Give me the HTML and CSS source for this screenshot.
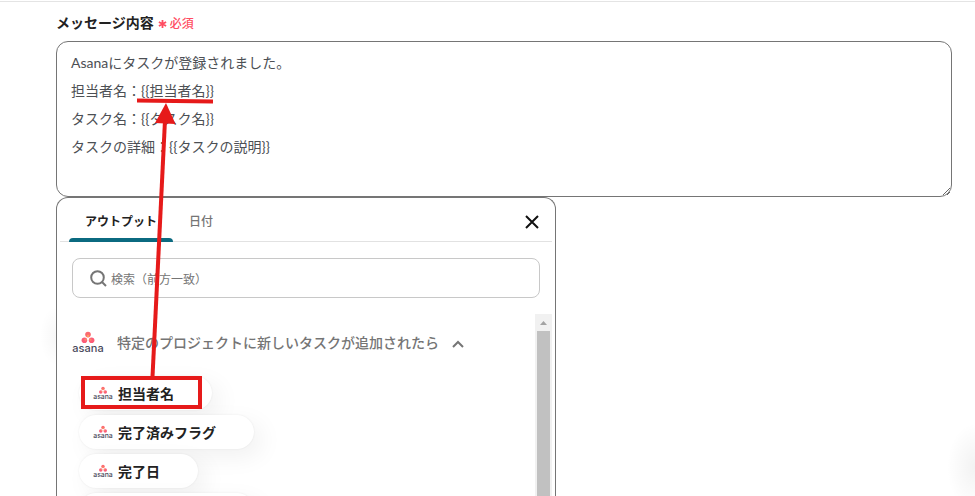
FILE: index.html
```html
<!DOCTYPE html>
<html lang="ja">
<head>
<meta charset="utf-8">
<meta name="viewport" content="width=device-width, initial-scale=1">
<title>メッセージ内容</title>
<link rel="stylesheet" href="styles.css">
</head>
<body>
<svg class="defs" aria-hidden="true">
  <symbol id="asana" viewBox="0 0 32 22">
    <circle cx="16" cy="3.6" r="2.8" fill="#fb6a70"/>
    <circle cx="12.4" cy="9.2" r="2.8" fill="#fb5c78"/>
    <circle cx="19.6" cy="9.2" r="2.8" fill="#fb5c78"/>
    <circle cx="16" cy="5" r="1.2" fill="#fda05c"/>
    <circle cx="13.6" cy="8.6" r="1.2" fill="#fd8a68"/>
    <circle cx="18.4" cy="8.6" r="1.2" fill="#fd8a68"/>
    <text x="16" y="21" text-anchor="middle" class="logo-text">asana</text>
  </symbol>
</svg>
<main class="page">
  <div class="field-head">
    <label class="field-label" for="message">メッセージ内容</label>
    <span class="required">
      <svg class="asterisk" viewBox="0 0 10 10" aria-hidden="true"><path d="M5 0.5v9M1 2.8l8 4.4M9 2.8l-8 4.4"/></svg>
      必須
    </span>
  </div>
  <textarea class="message" id="message" spellcheck="false">Asanaにタスクが登録されました。
担当者名：{{担当者名}}
タスク名：{{タスク名}}
タスクの詳細：{{タスクの説明}}</textarea>
  <section class="panel">
    <div class="tabs">
      <button class="tab active" type="button">アウトプット</button>
      <button class="tab" type="button">日付</button>
      <button class="close" type="button" aria-label="閉じる">
        <svg viewBox="0 0 14 14"><path d="M1 1l12 12M13 1L1 13"/></svg>
      </button>
    </div>
    <label class="search">
      <svg viewBox="0 0 17 17" aria-hidden="true"><circle cx="7.5" cy="7.5" r="6.3"/><path d="M12 12l4 4"/></svg>
      <input type="search" placeholder="検索（前方一致）" aria-label="検索">
    </label>
    <div class="results">
      <div class="list">
        <button class="group" type="button">
          <svg class="group-logo" aria-hidden="true"><use href="#asana"/></svg>
          <span>特定のプロジェクトに新しいタスクが追加されたら</span>
          <svg class="chevron" viewBox="0 0 12 8" aria-hidden="true"><path d="M1 7l5-5 5 5"/></svg>
        </button>
        <div class="chips">
          <button class="chip" type="button"><svg aria-hidden="true"><use href="#asana"/></svg>担当者名</button>
          <button class="chip" type="button"><svg aria-hidden="true"><use href="#asana"/></svg>完了済みフラグ</button>
          <button class="chip" type="button"><svg aria-hidden="true"><use href="#asana"/></svg>完了日</button>
          <div class="chip chip-next"></div>
        </div>
      </div>
      <div class="scrollbar" aria-hidden="true">
        <svg viewBox="0 0 17 17"><path d="M5 11h7L8.5 7z"/></svg>
        <div class="thumb"></div>
      </div>
    </div>
  </section>
</main>
<div class="glow glow-left"></div>
<div class="glow glow-right"></div>
<svg class="annotation" aria-hidden="true">
  <path class="mark" d="M137 100.5L213 101.5"/>
  <path class="mark" d="M152.500 377L165 120"/>
  <path class="head" d="M166 103L175.500 124L155 123z"/>
  <rect class="mark" x="83" y="378" width="117" height="29"/>
</svg>
</body>
</html>
```

FILE: styles.css
```css
* {
  box-sizing: border-box;
}

body {
  margin: 0;
  overflow: hidden;
  background: #fff;
  color: #222;
  font-family: Lato, "Noto Sans CJK JP", sans-serif;
  font-size: 14px;
}

button,
input,
textarea {
  font: inherit;
}

button {
  border: 0;
  background: none;
  padding: 0;
  white-space: nowrap;
}

.defs {
  display: none;
}

.logo-text {
  font: 500 11px Inter, sans-serif;
  fill: #4a4a5c;
}

.page {
  display: flex;
  flex-direction: column;
  height: 100vh;
  padding: 12px 23px 0 56px;
  background: linear-gradient(#e4e4e4, #e4e4e4) 0 1px / 100% 1px no-repeat;
}

.field-head {
  display: flex;
  align-items: center;
  gap: 4px;
  flex: none;
  height: 20px;
  margin-bottom: 9px;
}

.field-label {
  font-weight: 700;
}

.required {
  display: flex;
  align-items: center;
  gap: 3px;
  color: #ff4d62;
  font-size: 12px;
  font-weight: 500;
}

.asterisk {
  width: 9px;
  height: 10px;
  margin-top: 4px;
  fill: none;
  stroke: currentColor;
  stroke-width: 2;
}

.message {
  display: block;
  flex: none;
  width: 100%;
  height: 156px;
  padding: 7px 14px;
  border: 1px solid #757575;
  border-radius: 12px;
  color: #4c4f54;
  line-height: 28px;
  resize: both;
}

.panel {
  display: flex;
  flex-direction: column;
  flex: 1;
  min-height: 0;
  width: 500px;
  max-width: 100%;
  padding: 0 3px;
  border: 1px solid #757575;
  border-bottom: 0;
  border-radius: 12px 12px 0 0;
  overflow: hidden;
  background: #fff;
}

.tabs {
  display: flex;
  flex: none;
  height: 44px;
  padding: 0 13px 0 9px;
  border-bottom: 1px solid #e2e2e2;
}

.tab {
  position: relative;
  padding: 2px 16px 0;
  color: #757575;
  font-size: 12px;
  font-weight: 500;
}

.tab.active {
  color: #222;
  font-weight: 700;
}

.tab.active::after {
  content: "";
  position: absolute;
  left: 0;
  right: 0;
  bottom: -1px;
  height: 4px;
  border-radius: 4px 4px 0 0;
  background: #0b6a80;
}

.close {
  display: flex;
  align-items: center;
  margin-left: auto;
  padding-top: 4px;
}

.close svg {
  width: 14px;
  height: 14px;
  fill: none;
  stroke: #111;
  stroke-width: 2;
}

.search {
  display: flex;
  align-items: center;
  flex: none;
  gap: 4px;
  height: 40px;
  margin: 16px 12px;
  padding: 0 17px;
  border: 1px solid #c8c8c8;
  border-radius: 8px;
}

.search svg {
  width: 17px;
  height: 17px;
  fill: none;
  stroke: #757575;
  stroke-width: 2;
}

.search input {
  flex: 1;
  min-width: 0;
  padding: 2px 0 0;
  border: 0;
  outline: 0;
  background: none;
  font-size: 12px;
}

.search input::placeholder {
  color: #757575;
}

.results {
  display: flex;
  flex: 1;
  min-height: 0;
}

.list {
  flex: 1;
  min-width: 0;
  overflow: hidden;
  padding: 15px 12px 0;
}

.group {
  display: flex;
  align-items: center;
  height: 26px;
  color: #757575;
  font-weight: 500;
}

.group-logo {
  width: 32px;
  height: 22px;
  margin-right: 13px;
}

.chevron {
  width: 12px;
  height: 8px;
  margin: 4px 0 0 13px;
  fill: none;
  stroke: #757575;
  stroke-width: 2;
}

.chips {
  display: flex;
  flex-direction: column;
  align-items: flex-start;
  gap: 5px;
  padding: 21px 7px 0;
}

.chip {
  display: flex;
  align-items: center;
  flex: none;
  gap: 5px;
  height: 34px;
  padding: 0 38px 0 14px;
  border-radius: 17px;
  background: #fff;
  box-shadow: 0 0 2px rgba(0, 0, 0, 0.08), 8px 8px 24px rgba(0, 0, 0, 0.06);
  color: #222;
  font-weight: 700;
}

.chip-next {
  width: 175px;
}

.chip svg {
  width: 20px;
  height: 14px;
}

.scrollbar {
  display: flex;
  flex-direction: column;
  width: 17px;
  background: #f1f1f1;
}

.scrollbar svg {
  width: 17px;
  height: 17px;
  fill: #a3a3a3;
}

.thumb {
  flex: 1;
  margin: 0 2px;
  background: #c1c1c1;
}

.glow {
  position: absolute;
  pointer-events: none;
}

.glow-left {
  left: 40px;
  top: 306px;
  width: 16px;
  height: 60px;
  background: radial-gradient(16px 30px at 100% 50%, rgba(0, 0, 0, 0.03), transparent);
}

.glow-right {
  right: 0;
  top: 424px;
  width: 28px;
  height: 72px;
  background: radial-gradient(28px 44px at 100% 60%, rgba(0, 0, 0, 0.05), transparent);
}

.annotation {
  position: absolute;
  left: 0;
  top: 0;
  width: 100%;
  height: 100%;
  pointer-events: none;
}

.mark {
  fill: none;
  stroke: #e61a1a;
  stroke-width: 4;
}

.head {
  fill: #e61a1a;
}
```
